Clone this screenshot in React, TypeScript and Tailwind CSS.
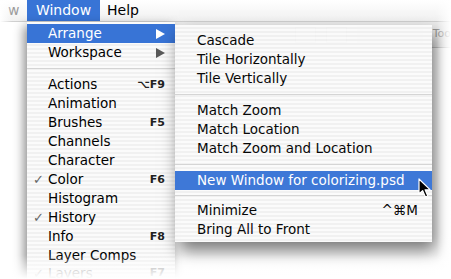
import React from 'react';

type Item =
  | { kind: 'sep'; h: string }
  | { kind: 'item'; label: string; key?: string; check?: boolean; arrow?: boolean; active?: boolean; faded?: boolean };

const windowMenu: Item[] = [
  { kind: 'item', label: 'Arrange', arrow: true, active: true },
  { kind: 'item', label: 'Workspace', arrow: true },
  { kind: 'sep', h: 'h-[13px]' },
  { kind: 'item', label: 'Actions', key: '⌥F9' },
  { kind: 'item', label: 'Animation' },
  { kind: 'item', label: 'Brushes', key: 'F5' },
  { kind: 'item', label: 'Channels' },
  { kind: 'item', label: 'Character' },
  { kind: 'item', label: 'Color', key: 'F6', check: true },
  { kind: 'item', label: 'Histogram' },
  { kind: 'item', label: 'History', check: true },
  { kind: 'item', label: 'Info', key: 'F8' },
  { kind: 'item', label: 'Layer Comps' },
  { kind: 'item', label: 'Layers', key: 'F7', check: true, faded: true },
];

const arrangeMenu: Item[] = [
  { kind: 'item', label: 'Cascade' },
  { kind: 'item', label: 'Tile Horizontally' },
  { kind: 'item', label: 'Tile Vertically' },
  { kind: 'sep', h: 'h-[13px]' },
  { kind: 'item', label: 'Match Zoom' },
  { kind: 'item', label: 'Match Location' },
  { kind: 'item', label: 'Match Zoom and Location' },
  { kind: 'sep', h: 'h-[13px]' },
  { kind: 'item', label: 'New Window for colorizing.psd', active: true },
  { kind: 'sep', h: 'h-[11px]' },
  { kind: 'item', label: 'Minimize', key: '^⌘M' },
  { kind: 'item', label: 'Bring All to Front' },
];

const stripes =
  'bg-[image:repeating-linear-gradient(180deg,#fbfbfb_0px,#fbfbfb_2px,#f1f1f1_2px,#f1f1f1_4px)]';

function Arrow({ white }: { white?: boolean }) {
  return (
    <svg width="9" height="10" viewBox="0 0 9 10" className="shrink-0">
      <path d="M0 0 L9 5 L0 10 Z" fill={white ? '#ffffff' : '#5a5a5a'} />
    </svg>
  );
}

function Cursor() {
  return (
    <svg width="14" height="21" viewBox="0 0 14 21">
      <path
        d="M1 1 L1 16 L4.6 12.6 L7.4 19 L9.8 18 L7.1 11.8 L12 11.6 Z"
        fill="#000"
        stroke="#fff"
        strokeWidth="1.2"
        strokeLinejoin="round"
      />
    </svg>
  );
}

function Menu({ items, sub }: { items: Item[]; sub?: boolean }) {
  return (
    <div className="flex flex-col">
      {items.map((it, i) =>
        it.kind === 'sep' ? (
          <div key={i} className={`${it.h} flex items-center`}>
            <div className="h-px w-full bg-[#d4d4d4]" />
          </div>
        ) : (
          <div
            key={i}
            className={`h-[19px] flex ${it.faded ? 'items-start pt-[2px]' : 'items-center'} ${
              sub ? 'pl-[22px] pr-[14px]' : 'pl-[6px] pr-[10px]'
            } ${it.active ? 'bg-[#3874d6] text-white' : 'text-black'} ${it.faded ? 'opacity-40' : ''}`}
          >
            {!sub && (
              <span className="w-[15px] text-[13px] text-[#666] leading-none">{it.check ? '✓' : ''}</span>
            )}
            <span className="flex-1 text-[13.5px] leading-none whitespace-nowrap">{it.label}</span>
            {it.arrow && <Arrow white={it.active} />}
            {it.key &&
              (sub ? (
                <span className="text-[13.5px] leading-none">{it.key}</span>
              ) : (
                <span className="text-[11px] font-bold leading-none text-[#222]">{it.key}</span>
              ))}
          </div>
        ),
      )}
    </div>
  );
}

export default function App() {
  return (
    <div
      className="relative w-[451px] h-[279px] overflow-hidden bg-white"
      style={{ fontFamily: '"DejaVu Sans", "Liberation Sans", sans-serif' }}
    >
      {/* menubar */}
      <div className="h-[22px] flex items-stretch bg-gradient-to-b from-white to-[#f1f1f1] border-b border-[#d0d0d0] text-[14px]">
        <div className="w-[27px] flex items-center pl-[8px] text-[#9a9a9a]">w</div>
        <div className="w-[73px] flex items-center justify-center bg-[#3874d6] text-white">Window</div>
        <div className="flex items-center pl-[7px] text-black">Help</div>
      </div>

      {/* document toolbar behind the menus */}
      <div className="ml-[175px] h-[26px] bg-[#ececec] border-b border-[#c8c8c8] flex items-center gap-[10px] pl-[120px]">
        <div className="w-[22px] h-[16px] border border-[#b0b0b0] bg-[#f6f6f6]" />
        <div className="w-[22px] h-[16px] border border-[#b0b0b0] bg-[#f6f6f6]" />
        <div className="w-[70px] h-[18px] bg-[#d8d8d8]" />
        <span className="text-[11px] text-[#999]">Too</span>
      </div>

      {/* Window menu */}
      <div
        className={`absolute left-[27px] top-[22px] w-[148px] pt-[2px] ${stripes} shadow-[-3px_4px_10px_rgba(0,0,0,0.45)]`}
      >
        <Menu items={windowMenu} />
      </div>

      {/* Arrange submenu */}
      <div
        className={`absolute left-[175px] top-[25px] w-[257px] pt-[6px] pb-[3px] ${stripes} opacity-[0.97] shadow-[4px_9px_16px_rgba(0,0,0,0.55)]`}
      >
        <Menu items={arrangeMenu} sub />
      </div>

      {/* mouse pointer */}
      <div className="absolute left-[418px] top-[178px]">
        <Cursor />
      </div>

      {/* feathered edges */}
      <div className="absolute left-0 right-0 bottom-0 h-[24px] bg-gradient-to-b from-transparent to-white" />
      <div className="absolute top-0 bottom-0 right-0 w-[14px] bg-gradient-to-r from-transparent to-white" />
      <div className="absolute top-0 bottom-0 left-0 w-[12px] bg-gradient-to-l from-transparent to-white" />
    </div>
  );
}
